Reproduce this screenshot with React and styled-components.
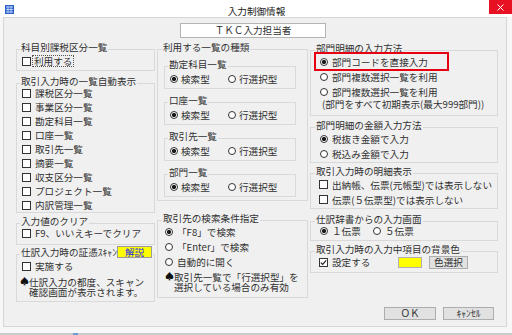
import React from "react";
import styled, { createGlobalStyle, css } from "styled-components";

const GlobalStyle = createGlobalStyle`
  html, body {
    margin: 0;
    padding: 0;
  }
  body {
    background: #f7f7f7;
    font-family: "Noto Sans CJK JP", "Noto Sans", sans-serif;
    font-size: 9.6px;
    color: #303030;
  }
  * {
    box-sizing: border-box;
  }
`;

const Window = styled.div`
  width: 512px;
  height: 335px;
  display: flex;
  flex-direction: column;
  background: #f7f7f7;
  overflow: hidden;
`;

const TitleBar = styled.div`
  height: 17px;
  flex-shrink: 0;
  display: flex;
  align-items: flex-start;
  background: #fff;
`;

const AppIcon = styled.svg`
  margin: 5px 0 0 5px;
  flex-shrink: 0;
`;

const Caption = styled.div`
  flex: 1;
  padding: 6px 0 0 10px;
  line-height: 10px;
  text-align: center;
  color: #222;
`;

const CloseButton = styled.div`
  width: 23px;
  height: 14px;
  display: flex;
  align-items: center;
  justify-content: center;
  background: #e81123;
`;

const Frame = styled.div`
  height: 310px;
  flex-shrink: 0;
  padding: 0 5px 0 3px;
`;

const Panel = styled.div`
  height: 100%;
  display: flex;
  flex-direction: column;
  border: 1px solid #d6d6d6;
  background: #f0f0f0;
`;

const UserField = styled.div`
  width: 146px;
  height: 15px;
  margin: 5px 0 0 176px;
  border: 1px solid #b4b4b4;
  background: #fff;
  line-height: 13px;
  text-align: center;
`;

const Columns = styled.div`
  display: grid;
  grid-template-columns: 139px 151px 188px;
  column-gap: 2px;
  margin-top: 11px;
  padding-left: 12px;
  align-items: start;
`;

const Column = styled.div`
  display: flex;
  flex-direction: column;
`;

const Group = styled.div`
  width: ${(p) => (p.$w ? `${p.$w}px` : "auto")};
  height: ${(p) => p.$h}px;
  margin-top: ${(p) => p.$mt || 0}px;
  border: 1px solid #d9d9d9;
  flex-shrink: 0;
`;

const Legend = styled.div`
  display: flex;
  align-items: center;
  width: ${(p) => (p.$full ? "auto" : "fit-content")};
  height: 10px;
  line-height: 10px;
  margin: -8px ${(p) => (p.$full ? 1 : 0)}px 0 ${(p) => p.$ml ?? 3}px;
  padding: 0 1px;
  background: #f0f0f0;
  white-space: nowrap;
`;

const GroupBody = styled.div`
  display: flex;
  flex-direction: column;
  padding: ${(p) => p.$pt || 0}px 0 0 ${(p) => p.$pl ?? 5}px;
`;

const Row = styled.div`
  display: flex;
  align-items: center;
  height: ${(p) => p.$h ?? 14}px;
  white-space: nowrap;

  ${(p) =>
    p.$boxed &&
    css`
      width: 131px;
      margin-left: -4px;
      padding-left: 4px;
      box-shadow: 0 0 0 2px #e60012;
    `}
`;

const Option = styled.span`
  display: flex;
  align-items: center;
  gap: ${(p) => p.$gap ?? 4}px;
  width: ${(p) => (p.$w ? `${p.$w}px` : "auto")};
  flex-shrink: 0;
`;

const Box = styled.span`
  width: 9px;
  height: 9px;
  display: flex;
  align-items: center;
  justify-content: center;
  border: 1px solid #333;
  background: #fff;
  flex-shrink: 0;
`;

const Circle = styled.span`
  width: 8px;
  height: 8px;
  border-radius: 50%;
  border: 1px solid #333;
  flex-shrink: 0;
  background: ${(p) =>
    p.$on ? "radial-gradient(circle, #1a1a1a 0 1.8px, #fff 2.4px)" : "#fff"};
`;

const FocusLabel = styled.span`
  height: 12px;
  line-height: 10px;
  padding: 0 1px;
  border: 1px dotted #555;
`;

const ContLine = styled.div`
  height: 10px;
  line-height: 10px;
  margin-left: 2px;
  white-space: nowrap;
`;

const Note = styled.div`
  display: flex;
  margin: ${(p) => p.$mt || 0}px 0 0 ${(p) => p.$ml || 0}px;
  line-height: 10px;
`;

const Spade = styled.span`
  width: 9px;
  flex-shrink: 0;
  font-size: 9px;
  color: #111;
`;

const NoteText = styled.div`
  white-space: nowrap;
`;

const HelpButton = styled.span`
  width: 35px;
  height: 12px;
  margin-left: auto;
  border: 1px solid #9a9a9a;
  background: #ffff00;
  color: #1c1cf0;
  line-height: 10px;
  text-align: center;
`;

const Swatch = styled.span`
  width: 24px;
  height: 11px;
  border: 1px solid #b0b0b0;
  background: #ffff00;
  flex-shrink: 0;
`;

const Button = styled.div`
  width: ${(p) => p.$w}px;
  height: 13px;
  border: 1px solid #adadad;
  background: #e1e1e1;
  line-height: 11px;
  text-align: center;
  white-space: nowrap;
`;

const ButtonRow = styled.div`
  display: flex;
  justify-content: flex-end;
  gap: 7px;
  margin-top: auto;
  padding: 0 12px 6px 0;
`;

const Gap = styled.div`
  height: 6px;
  flex-shrink: 0;
`;

const Taskbar = styled.div`
  flex: 1;
  padding-left: 73px;
  background: #cbcbcb;
`;

const TaskMark = styled.div`
  width: 5px;
  height: 100%;
  background: #6a9fd6;
`;

const Check = ({ on }) => (
  <Box>
    {on && (
      <svg width="7" height="7" viewBox="0 0 7 7">
        <path d="M0.8 3.6 L2.7 5.4 L6.2 1.4" stroke="#222" strokeWidth="1.2" fill="none" />
      </svg>
    )}
  </Box>
);

const CheckRow = ({ children, on, focus, h }) => (
  <Row $h={h}>
    <Option $gap={focus ? 1 : 4}>
      <Check on={on} />
      {focus ? <FocusLabel>{children}</FocusLabel> : <span>{children}</span>}
    </Option>
  </Row>
);

const RadioRow = ({ children, on, h, boxed }) => (
  <Row $h={h} $boxed={boxed}>
    <Option>
      <Circle $on={on} />
      <span>{children}</span>
    </Option>
  </Row>
);

const TypeGroup = ({ title, mt }) => (
  <Group $w={132} $h={23} $mt={mt}>
    <Legend>{title}</Legend>
    <GroupBody $pt={3} $pl={5}>
      <Row>
        <Option $w={58} $gap={3}>
          <Circle $on />
          <span>検索型</span>
        </Option>
        <Option $gap={3}>
          <Circle />
          <span>行選択型</span>
        </Option>
      </Row>
    </GroupBody>
  </Group>
);

const autoLists = [
  "課税区分一覧",
  "事業区分一覧",
  "勘定科目一覧",
  "口座一覧",
  "取引先一覧",
  "摘要一覧",
  "収支区分一覧",
  "プロジェクト一覧",
  "内訳管理一覧",
];

export default function App() {
  return (
    <>
      <GlobalStyle />
      <Window>
        <TitleBar>
          <AppIcon width="9" height="9" viewBox="0 0 9 9">
            <rect width="9" height="9" fill="#2f62c8" />
            <path d="M1 2h7M1 4.5h7M1 7h7M3 1v7M6 1v7" stroke="#cfe0ff" strokeWidth="0.8" />
          </AppIcon>
          <Caption>入力制御情報</Caption>
          <CloseButton>
            <svg width="7" height="7" viewBox="0 0 7 7">
              <path d="M0.5 0.5 L6.5 6.5 M6.5 0.5 L0.5 6.5" stroke="#fff" strokeWidth="1" />
            </svg>
          </CloseButton>
        </TitleBar>

        <Frame>
          <Panel>
            <UserField>ＴＫＣ入力担当者</UserField>

            <Columns>
              <Column>
                <Group $h={22}>
                  <Legend>科目別課税区分一覧</Legend>
                  <GroupBody $pt={2}>
                    <CheckRow focus h={14}>利用する</CheckRow>
                  </GroupBody>
                </Group>

                <Group $h={130} $mt={12}>
                  <Legend>取引入力時の一覧自動表示</Legend>
                  <GroupBody>
                    {autoLists.map((name) => (
                      <CheckRow key={name}>{name}</CheckRow>
                    ))}
                  </GroupBody>
                </Group>

                <Group $h={22} $mt={10}>
                  <Legend>入力値のクリア</Legend>
                  <GroupBody>
                    <CheckRow>F9、いいえキーでクリア</CheckRow>
                  </GroupBody>
                </Group>

                <Group $h={48} $mt={9}>
                  <Legend $full>
                    <span>仕訳入力時の証憑ｽｷｬﾝ</span>
                    <HelpButton>解説</HelpButton>
                  </Legend>
                  <GroupBody $pt={2}>
                    <CheckRow>実施する</CheckRow>
                    <Note $mt={4} $ml={-2}>
                      <Spade>♠</Spade>
                      <NoteText>
                        仕訳入力の都度、スキャン
                        <br />
                        確認画面が表示されます。
                      </NoteText>
                    </Note>
                  </GroupBody>
                </Group>
              </Column>

              <Column>
                <Group $h={152}>
                  <Legend $ml={4}>利用する一覧の種類</Legend>
                  <GroupBody $pt={14} $pl={6}>
                    <TypeGroup title="勘定科目一覧" />
                    <TypeGroup title="口座一覧" mt={13} />
                    <TypeGroup title="取引先一覧" mt={13} />
                    <TypeGroup title="部門一覧" mt={13} />
                  </GroupBody>
                </Group>

                <Group $h={78} $mt={19}>
                  <Legend $ml={4}>取引先の検索条件指定</Legend>
                  <GroupBody $pt={1} $pl={7}>
                    <RadioRow on h={15}>「F8」で検索</RadioRow>
                    <RadioRow h={15}>「Enter」で検索</RadioRow>
                    <RadioRow h={15}>自動的に開く</RadioRow>
                    <Note $mt={3}>
                      <Spade>♠</Spade>
                      <NoteText>
                        取引先一覧で「行選択型」を
                        <br />
                        選択している場合のみ有効
                      </NoteText>
                    </Note>
                  </GroupBody>
                </Group>
              </Column>

              <Column>
                <Group $h={66} $mt={1}>
                  <Legend $ml={4}>部門明細の入力方法</Legend>
                  <GroupBody $pt={1} $pl={9}>
                    <RadioRow on boxed h={15}>部門コードを直接入力</RadioRow>
                    <RadioRow h={15}>部門複数選択一覧を利用</RadioRow>
                    <RadioRow h={15}>部門複数選択一覧を利用</RadioRow>
                    <ContLine>(部門をすべて初期表示(最大999部門))</ContLine>
                  </GroupBody>
                </Group>

                <Group $h={36} $mt={11}>
                  <Legend $ml={4}>部門明細の金額入力方法</Legend>
                  <GroupBody $pt={1} $pl={9}>
                    <RadioRow on h={15}>税抜き金額で入力</RadioRow>
                    <RadioRow h={15}>税込み金額で入力</RadioRow>
                  </GroupBody>
                </Group>

                <Group $h={36} $mt={10}>
                  <Legend $ml={4}>取引入力時の明細表示</Legend>
                  <GroupBody $pt={1} $pl={8}>
                    <CheckRow h={15}>出納帳、伝票(元帳型)では表示しない</CheckRow>
                    <CheckRow h={15}>伝票(５伝票型)では表示しない</CheckRow>
                  </GroupBody>
                </Group>

                <Group $h={20} $mt={12}>
                  <Legend $ml={4}>仕訳辞書からの入力画面</Legend>
                  <GroupBody $pl={9}>
                    <Row>
                      <Option $w={53}>
                        <Circle $on />
                        <span>１伝票</span>
                      </Option>
                      <Option>
                        <Circle />
                        <span>５伝票</span>
                      </Option>
                    </Row>
                  </GroupBody>
                </Group>

                <Group $h={22} $mt={10}>
                  <Legend $ml={4}>取引入力時の入力中項目の背景色</Legend>
                  <GroupBody $pt={1} $pl={8}>
                    <Row>
                      <Option $w={79}>
                        <Check on />
                        <span>設定する</span>
                      </Option>
                      <Swatch />
                      <Option $w={7} />
                      <Button $w={39}>色選択</Button>
                    </Row>
                  </GroupBody>
                </Group>
              </Column>
            </Columns>

            <ButtonRow>
              <Button $w={52}>ＯＫ</Button>
              <Button $w={51}>ｷｬﾝｾﾙ</Button>
            </ButtonRow>
          </Panel>
        </Frame>

        <Gap />
        <Taskbar>
          <TaskMark />
        </Taskbar>
      </Window>
    </>
  );
}
